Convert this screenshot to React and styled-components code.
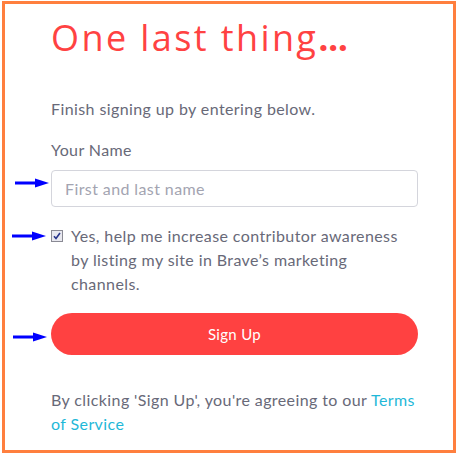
import React from 'react'
import styled, { createGlobalStyle } from 'styled-components'

const GlobalStyle = createGlobalStyle`
  html, body {
    margin: 0;
    padding: 0;
    background: #ffffff;
  }
  body {
    font-family: 'Lato', 'Open Sans', sans-serif;
  }
`;

const Arrow = () => (
  <svg width="34" height="10" viewBox="0 0 34 10">
    <rect x="0" y="3.5" width="22" height="3" fill="#0000ff" />
    <polygon points="20,0.5 34,5 20,9.5" fill="#0000ff" />
  </svg>
);

const App = () => {
  return (
    <>
      <GlobalStyle />
      <Frame>
        <Title>One last thing<Dots>...</Dots></Title>
        <Intro>Finish signing up by entering below.</Intro>

        <FieldLabel>Your Name</FieldLabel>
        <Annotated $gap={8}>
          <ArrowMark $top={8} $left={-36}><Arrow /></ArrowMark>
          <NameInput placeholder="First and last name" />
        </Annotated>

        <Annotated $gap={17}>
          <ArrowMark $top={7} $left={-39}><Arrow /></ArrowMark>
          <CheckRow>
            <CheckBox>
              <svg width="10" height="10" viewBox="0 0 10 10">
                <path d="M2 5.2 L4 7.5 L8 2" fill="none" stroke="#27348b" strokeWidth="1.6" />
              </svg>
            </CheckBox>
            <CheckText>
              Yes, help me increase contributor awareness by listing my site in Brave’s marketing channels.
            </CheckText>
          </CheckRow>
        </Annotated>

        <Annotated $gap={17}>
          <ArrowMark $top={19} $left={-38}><Arrow /></ArrowMark>
          <SignUpButton>Sign Up</SignUpButton>
        </Annotated>

        <Terms>
          By clicking 'Sign Up', you're agreeing to our <TermsLink href="#">Terms of Service</TermsLink>
        </Terms>
      </Frame>
    </>
  )
}

export default App

const Frame = styled.div`
  box-sizing: border-box;
  margin: 1px 0 0 2px;
  width: 454px;
  height: 452px;
  border: 3px solid #ff7f3e;
  padding: 12px 35px 0 46px;
  display: flex;
  flex-direction: column;
`;

const Title = styled.h1`
  margin: 0;
  font-family: 'Open Sans', sans-serif;
  font-weight: 400;
  font-size: 36px;
  line-height: 44px;
  color: #ff4242;
  letter-spacing: 2.4px;
`;

const Dots = styled.span`
  font-weight: 700;
  letter-spacing: -0.5px;
`;

const Intro = styled.p`
  margin: 37px 0 0 0;
  font-size: 16px;
  line-height: 24px;
  letter-spacing: 0.4px;
  color: #686978;
`;

const FieldLabel = styled.label`
  margin-top: 17px;
  font-size: 16px;
  line-height: 24px;
  letter-spacing: 0.4px;
  color: #686978;
`;

const Annotated = styled.div`
  position: relative;
  margin-top: ${p => p.$gap}px;
`;

const ArrowMark = styled.div`
  position: absolute;
  top: ${p => p.$top}px;
  left: ${p => p.$left}px;
  line-height: 0;
`;

const NameInput = styled.input`
  display: block;
  box-sizing: border-box;
  margin: 0;
  width: 100%;
  height: 37px;
  padding: 0 13px;
  border: 1px solid #d4d5dc;
  border-radius: 4px;
  font-family: 'Lato', sans-serif;
  font-size: 16px;
  letter-spacing: 0.4px;
  color: #686978;
  outline: none;
  &::placeholder {
    color: #a3a4b1;
  }
`;

const CheckRow = styled.div`
  display: flex;
  align-items: flex-start;
  gap: 8px;
`;

const CheckBox = styled.span`
  box-sizing: border-box;
  flex: none;
  margin-top: 6px;
  width: 12px;
  height: 12px;
  border: 1px solid #8a8a94;
  background: #e9e9f0;
  display: flex;
  align-items: center;
  justify-content: center;
`;

const CheckText = styled.span`
  font-size: 16px;
  line-height: 24px;
  letter-spacing: 0.4px;
  color: #686978;
`;

const SignUpButton = styled.button`
  display: block;
  width: 100%;
  height: 42px;
  border: none;
  border-radius: 21px;
  background: #ff4141;
  color: #ffffff;
  font-family: 'Lato', sans-serif;
  font-size: 15px;
  letter-spacing: 0.3px;
  cursor: pointer;
`;

const Terms = styled.p`
  margin: 33px 0 0 0;
  font-size: 16px;
  line-height: 24px;
  letter-spacing: 0.4px;
  color: #686978;
`;

const TermsLink = styled.a`
  color: #1fb8d8;
  text-decoration: none;
`;
